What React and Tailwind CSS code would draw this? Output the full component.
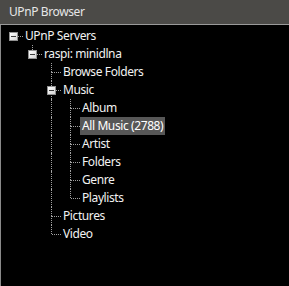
const tree = {
  label: 'UPnP Servers',
  open: true,
  children: [
    {
      label: 'raspi: minidlna',
      open: true,
      children: [
        { label: 'Browse Folders' },
        {
          label: 'Music',
          open: true,
          children: [
            { label: 'Album' },
            { label: 'All Music (2788)', selected: true },
            { label: 'Artist' },
            { label: 'Folders' },
            { label: 'Genre' },
            { label: 'Playlists' },
          ],
        },
        { label: 'Pictures' },
        { label: 'Video' },
      ],
    },
  ],
};

// flatten the tree into rows; guides[i] = ancestor at depth i has a sibling below
function flatten(node, guides, isRoot, isLast, out) {
  out.push({ node, guides, isRoot, isLast });
  if (node.open && node.children) {
    node.children.forEach((c, i) =>
      flatten(c, [...guides, !isLast], false, i === node.children.length - 1, out)
    );
  }
  return out;
}

function Minus() {
  return (
    <div className="relative z-10 flex h-[9px] w-[9px] items-center justify-center border border-[#919191] bg-gradient-to-br from-white to-[#d4d4d4]">
      <div className="h-px w-[5px] bg-[#3c3c3c]" />
    </div>
  );
}

function Connector({ row }) {
  const expandable = row.node.children && row.node.children.length > 0;
  return (
    <div className="relative flex h-[18px] w-[19px] shrink-0 items-center justify-center">
      {!row.isRoot && (
        <div className="absolute top-0 left-[9px] h-[9px] border-l border-dotted border-[#a0a0a0]" />
      )}
      {!row.isRoot && !row.isLast && (
        <div className="absolute top-[9px] left-[9px] h-[9px] border-l border-dotted border-[#a0a0a0]" />
      )}
      <div className="absolute top-[9px] left-[10px] w-[9px] border-t border-dotted border-[#a0a0a0]" />
      {expandable && <Minus />}
    </div>
  );
}

function Row({ row }) {
  return (
    <div className="flex h-[18px] items-center">
      {row.guides.map((g, i) => (
        <div key={i} className="relative h-[18px] w-[19px] shrink-0">
          {g && <div className="absolute top-0 left-[9px] h-[18px] border-l border-dotted border-[#a0a0a0]" />}
        </div>
      ))}
      <Connector row={row} />
      <span
        className={
          'flex h-[18px] items-center px-[2px] leading-none ' +
          (row.node.selected ? 'bg-[#575757] text-white' : 'text-[#f2f2f2]')
        }
      >
        {row.node.label}
      </span>
    </div>
  );
}

export default function App() {
  const rows = flatten(tree, [], true, true, []);
  return (
    <div
      className="flex h-[286px] w-[289px] flex-col bg-black text-[12px] tracking-[-0.4px]"
      style={{ fontFamily: '"Noto Sans", "Open Sans", sans-serif' }}
    >
      <div className="flex h-[25px] shrink-0 items-center border-b border-[#9a9a9a] bg-[#4b4a47] pl-[9px] text-[#e6e6e6]">
        UPnP Browser
      </div>
      <div className="flex-1 border-l border-[#8a8a8a] pt-[2px] pl-[3px]">
        {rows.map((r, i) => (
          <Row key={i} row={r} />
        ))}
      </div>
    </div>
  );
}
